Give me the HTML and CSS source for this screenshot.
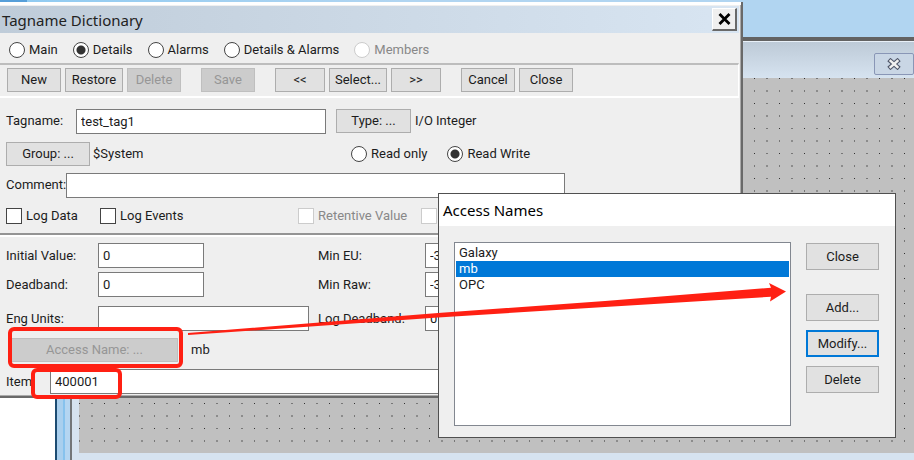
FILE: index.html
```html
<!DOCTYPE html>
<html lang="en">
<head>
<meta charset="utf-8">
<title>Tagname Dictionary</title>
<link rel="stylesheet" href="styles.css">
</head>
<body>
<div class="desktop">
  <div class="topstrip"></div>
  <div class="backdrop">
    <div class="page"></div>
    <div class="frame">
      <div class="frame-title">
        <button class="frame-close" aria-label="Close window">
          <svg width="14" height="12" viewBox="0 0 16 14"><path d="M4 3.500L12 10.500M12 3.500L4 10.500" stroke="#50576a" stroke-width="5.4" stroke-linecap="square"/><path d="M4 3.500L12 10.500M12 3.500L4 10.500" stroke="#f1f1f1" stroke-width="2.8" stroke-linecap="square"/></svg>
        </button>
      </div>
      <div class="canvas"></div>
    </div>
  </div>

  <form class="window dictionary">
    <header class="titlebar">
      <h1>Tagname Dictionary</h1>
      <button type="button" class="close" aria-label="Close"><svg width="13" height="12" viewBox="0 0 13 12"><path d="M1.5 1L11.5 11M11.5 1L1.5 11" stroke="#000" stroke-width="2.8"/></svg></button>
    </header>
    <div class="views">
      <label><input type="radio" name="view">Main</label>
      <label><input type="radio" name="view" checked>Details</label>
      <label><input type="radio" name="view">Alarms</label>
      <label><input type="radio" name="view">Details &amp; Alarms</label>
      <label class="off"><input type="radio" name="view" disabled>Members</label>
    </div>
    <div class="toolbar">
      <div class="group"><button type="button">New</button><button type="button" class="wide">Restore</button><button type="button" disabled>Delete</button></div>
      <div class="group"><button type="button" disabled>Save</button></div>
      <div class="group"><button type="button" class="nav">&lt;&lt;</button><button type="button" class="wide">Select...</button><button type="button" class="nav">&gt;&gt;</button></div>
      <div class="group"><button type="button">Cancel</button><button type="button">Close</button></div>
    </div>
    <div class="general">
      <div class="row tag-row">
        <label for="tagname">Tagname:</label>
        <input id="tagname" type="text" value="test_tag1">
        <button type="button">Type: ...</button>
        <span>I/O Integer</span>
      </div>
      <div class="row group-row">
        <button type="button">Group: ...</button>
        <span>$System</span>
        <label><input type="radio" name="access">Read only</label>
        <label><input type="radio" name="access" checked>Read Write</label>
      </div>
      <div class="row comment-row">
        <label for="comment">Comment:</label>
        <input id="comment" type="text">
      </div>
      <div class="row check-row">
        <label><input type="checkbox">Log Data</label>
        <label><input type="checkbox">Log Events</label>
        <label class="off"><input type="checkbox" disabled>Retentive Value</label>
        <label class="off"><input type="checkbox" disabled aria-label="Retentive Parameters"></label>
      </div>
    </div>
    <div class="details">
      <div class="fields">
        <label for="initial">Initial Value:</label><input id="initial" class="short" type="text" value="0">
        <label for="mineu">Min EU:</label><input id="mineu" class="short" type="text" value="-32768">
        <label for="deadband">Deadband:</label><input id="deadband" class="short" type="text" value="0">
        <label for="minraw">Min Raw:</label><input id="minraw" class="short" type="text" value="-32768">
      </div>
      <div class="fields units">
        <label for="units">Eng Units:</label><input id="units" type="text">
        <label for="logdb">Log Deadband:</label><input id="logdb" class="short" type="text" value="0">
      </div>
      <div class="row access-row">
        <button type="button" disabled>Access Name: ...</button>
        <span>mb</span>
      </div>
      <div class="row item-row">
        <label for="item">Item:</label>
        <input id="item" type="text" value="400001">
      </div>
    </div>
  </form>

  <form class="window names">
    <h2>Access Names</h2>
    <div class="names-body">
      <select size="11" aria-label="Access Names">
        <option>Galaxy</option>
        <option selected>mb</option>
        <option>OPC</option>
      </select>
      <div class="actions">
        <button type="button" class="first">Close</button>
        <button type="button">Add...</button>
        <button type="button" class="default">Modify...</button>
        <button type="button">Delete</button>
      </div>
    </div>
  </form>

  <svg class="marks" width="914" height="460" viewBox="0 0 914 460" aria-hidden="true">
    <g fill="none" stroke="#ff2013" stroke-width="4">
      <rect x="10" y="329" width="171" height="37" rx="4"/>
      <rect x="33" y="370" width="87" height="27" rx="4"/>
    </g>
    <path d="M188 333L438 313L605 301L771 287.700L769 283L786 291.500L770 301.500L771 296.700L605 307L438 317.500L188 335Z" fill="#ff2013"/>
  </svg>
</div>
</body>
</html>
```

FILE: styles.css
```css
* { box-sizing: border-box; }

body {
  margin: 0;
  font: 13px/16px Roboto, "Liberation Sans", sans-serif;
  color: #1c1c1c;
}

.desktop {
  position: relative;
  display: flex;
  flex-direction: column;
  min-height: 100vh;
  overflow: hidden;
  background: #b1d5f1;
}

.topstrip {
  height: 37px;
  background: linear-gradient(90deg, #579fd9 0 27px, #91cbf1 27px, #b1d5f1 400px);
}

.backdrop { display: flex; flex: 1; }
.page { width: 55px; background: #fff; }

.frame {
  flex: 1;
  display: flex;
  flex-direction: column;
  padding: 0 0 7px 24px;
  border-top: 4px solid #636363;
  background: linear-gradient(90deg, #1d4c72 0 2px, #a9cfee 2px 8px, #87c2ed 8px 10px, #b4d5f1 10px 15px, #737679 15px 17px, #d6e3f0 17px);
}

.frame-title {
  display: flex;
  justify-content: flex-end;
  height: 37px;
  padding-top: 11px;
  border-top: 1px solid #e8f0f8;
  background: linear-gradient(#bdcad7, #d6e3f0);
}

.frame-close {
  display: grid;
  place-items: center;
  width: 40px;
  height: 22px;
  padding: 0;
  border: 1px solid #8996b6;
  border-radius: 2px;
  background: #c9d6e5;
}

/* Alignment grid: one dot every 12.5px, drawn as four dots per 25px tile */
.canvas {
  flex: 1;
  background:
    conic-gradient(from 270deg at 1px 1px, #333 90deg, transparent 0) 0 0 / 25px 25px,
    conic-gradient(from 270deg at 2px 1px, #777 90deg, transparent 0) 12px 0 / 25px 25px,
    conic-gradient(from 270deg at 1px 2px, #777 90deg, transparent 0) 0 12px / 25px 25px,
    conic-gradient(from 270deg at 2px 2px, #8c8c8c 90deg, transparent 0) 12px 12px / 25px 25px,
    #c0c0c0;
}

.window { position: absolute; background: #efefef; }

button {
  height: 24px;
  padding: 0;
  border: 1px solid #adadad;
  background: #e1e1e1;
  color: inherit;
  font: inherit;
  white-space: nowrap;
}
button:disabled { border-color: #bfbfbf; background: #ccc; color: #969696; }

input[type="text"] {
  min-width: 0;
  height: 25px;
  padding: 0 4px;
  border: 1px solid #7a7a7a;
  background: #fff;
  color: inherit;
  font: inherit;
}

input[type="radio"], input[type="checkbox"] {
  appearance: none;
  flex: none;
  width: 16px;
  height: 16px;
  margin: 0;
  border: 1px solid #444;
  background: #fff;
}
input[type="radio"] { border-radius: 50%; }
input[type="radio"]:checked { background: radial-gradient(circle, #333 4px, #fff 5px); }
input:disabled { border-color: #ccc; }

label { display: flex; align-items: center; gap: 4px; white-space: nowrap; }
.off { color: #888; }
.row { display: flex; align-items: center; }

/* Tagname Dictionary */
.dictionary {
  top: 2px;
  left: 0;
  right: 171px;
  border-right: 2px solid #696969;
  border-bottom: 2px solid #696969;
  padding: 4px 2px 1px 0;
  box-shadow: inset 0 3px #fff, inset -1px -1px #aaa;
}

.titlebar {
  display: flex;
  align-items: center;
  justify-content: space-between;
  height: 27px;
  padding: 0 2px;
  background: linear-gradient(90deg, #bfccd9, #d8e5f2);
}
.titlebar h1 { margin: 0; font: 15px/20px "Noto Sans", sans-serif; color: #222; }
.close {
  display: grid;
  place-items: center;
  width: 25px;
  height: 23px;
  border: solid;
  border-width: 1px 2px 2px 1px;
  border-color: #fff #696969 #696969 #fff;
  background: #efefef;
}

.views { display: flex; gap: 15px; height: 30px; padding: 4px 9px 0; }

.toolbar {
  display: flex;
  gap: 20px;
  height: 35px;
  padding: 3px 7px;
  border-top: 2px solid #bdbdbd;
  border-right: 1px solid #fff;
  border-bottom: 2px solid #fff;
}
.group { display: flex; gap: 4px; }
.group button { width: 54px; }
.group .wide { width: 58px; }
.group .nav { width: 50px; }

.general {
  padding: 7px 6px 1px;
  border-bottom: 2px solid #949494;
}
.row input[type="text"] { margin-right: 10px; }
.tag-row { height: 32px; }
.tag-row label { width: 70px; }
.tag-row input { width: 250px; }
.tag-row button { width: 75px; margin-right: 4px; }
.group-row { height: 33px; }
.group-row button { width: 84px; margin-right: 3px; }
.group-row span { width: 258px; }
.group-row label + label { margin-left: 20px; }
.comment-row { height: 30px; }
.comment-row label { width: 60px; }
.comment-row input { width: 499px; }
.check-row { height: 32px; }
.check-row label:nth-child(1) { width: 94px; }
.check-row label:nth-child(2) { width: 198px; }
.check-row label:nth-child(3) { width: 123px; }

.details { padding: 6px 0 1px 6px; border-top: 2px solid #fff; }
.fields {
  display: grid;
  grid-template-columns: 92px 220px 107px 1fr;
  row-gap: 4px;
  align-items: center;
}
.fields .short { width: 106px; }
.units { margin-top: 9px; }
.units #units { width: 211px; }
.access-row { height: 38px; padding: 0 5px; }
.access-row button { width: 167px; margin-right: 13px; }
.item-row label { width: 44px; }
.item-row input[type="text"] { flex: 1; margin: 0; }

/* Access Names */
.names {
  top: 193px;
  left: 438px;
  right: 18px;
  border: 1px solid #505050;
}
.names h2 {
  margin: 0;
  padding: 4px;
  background: #fff;
  color: #000;
  font: 15px/24px "Noto Sans", sans-serif;
}
.names-body { display: flex; gap: 15px; padding: 16px 16px 11px 15px; }
.names select {
  flex: 1;
  min-width: 0;
  height: 184px;
  padding: 2px 1px;
  border: 1px solid #828790;
  border-radius: 0;
  background: #fff;
  color: #1c1c1c;
  font: inherit;
  overflow: hidden;
}
.names option { min-height: 16px; padding: 0 3px; line-height: 16px; }
.names option:checked {
  background: linear-gradient(#0078d7, #0078d7);
  -webkit-text-fill-color: #fff;
}
.actions { display: flex; flex-direction: column; gap: 9px; width: 73px; padding-top: 1px; }
.actions button { height: 27px; }
.actions .first { margin-bottom: 15px; }
.actions .default { border: 2px solid #0078d7; }

/* Annotations over the windows */
.marks { position: absolute; top: 0; left: 0; pointer-events: none; }
```
